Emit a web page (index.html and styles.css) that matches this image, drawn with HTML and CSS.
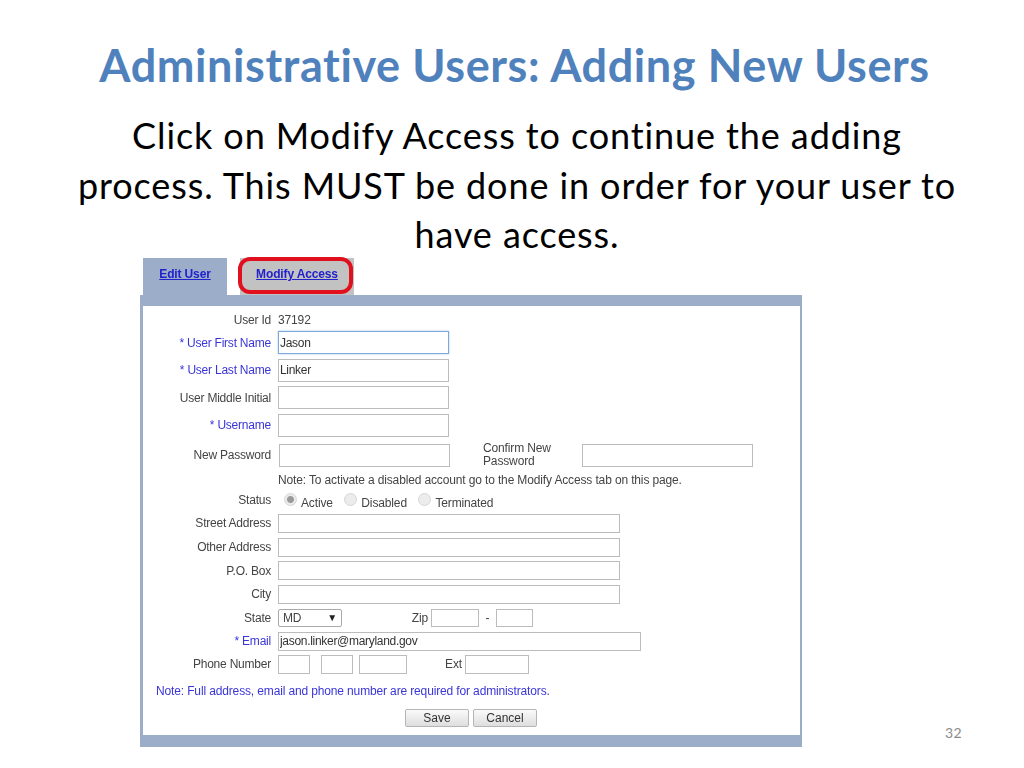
FILE: index.html

```html
<!DOCTYPE html>
<html lang="en">
<head>
    <meta charset="UTF-8">
    <meta name="viewport" content="width=device-width, initial-scale=1.0">
    <title>Administrative Users: Adding New Users</title>
    <link rel="stylesheet" href="styles.css">
</head>
<body>
    <div class="slide">
        <h1>Administrative Users: Adding New Users</h1>
        <p class="lead">Click on Modify Access to continue the adding<br>process. This MUST be done in order for your user to<br>have access.</p>
        <div class="shot-row">
            <div class="shot">
                <div class="tabs">
                    <div class="tab tab-active"><a href="#">Edit User</a></div>
                    <div class="tab tab-other"><a href="#">Modify Access</a><span class="red-mark"></span></div>
                </div>
                <div class="panel">
                    <div class="row row-id"><label>User Id</label><span class="value">37192</span></div>
                    <div class="row row-tall"><label class="req">* User First Name</label><input class="w-171 focused" value="Jason"></div>
                    <div class="row row-tall"><label class="req">* User Last Name</label><input class="w-171" value="Linker"></div>
                    <div class="row row-tall"><label>User Middle Initial</label><input class="w-171"></div>
                    <div class="row row-tall"><label class="req">* Username</label><input class="w-171"></div>
                    <div class="row row-tall row-pass">
                        <label>New Password</label><input class="w-171 nudge">
                        <span class="confirm">Confirm New<br>Password</span><input class="w-171">
                    </div>
                    <div class="row row-note"><label></label><span class="value">Note: To activate a disabled account go to the Modify Access tab on this page.</span></div>
                    <div class="row row-status">
                        <label>Status</label>
                        <div class="radios">
                            <input type="radio" name="status" checked disabled><span>Active</span>
                            <input type="radio" name="status" disabled><span>Disabled</span>
                            <input type="radio" name="status" disabled><span>Terminated</span>
                        </div>
                    </div>
                    <div class="row row-short first-short"><label>Street Address</label><input class="w-342"></div>
                    <div class="row row-short"><label>Other Address</label><input class="w-342"></div>
                    <div class="row row-short"><label>P.O. Box</label><input class="w-342"></div>
                    <div class="row row-short"><label>City</label><input class="w-342"></div>
                    <div class="row row-state">
                        <label>State</label>
                        <div class="select"><span>MD</span><span class="arrow">▼</span></div>
                        <span class="zip-label">Zip</span><input class="w-48">
                        <span class="dash">-</span><input class="w-37">
                    </div>
                    <div class="row row-short row-email"><label class="req">* Email</label><input class="w-363" value="jason.linker@maryland.gov"></div>
                    <div class="row row-short">
                        <label>Phone Number</label>
                        <input class="w-32"><input class="w-32 gap-11"><input class="w-48 gap-6">
                        <span class="ext-label">Ext</span><input class="w-64">
                    </div>
                    <div class="required-note">Note: Full address, email and phone number are required for administrators.</div>
                    <div class="buttons">
                        <button type="button">Save</button>
                        <button type="button">Cancel</button>
                    </div>
                </div>
            </div>
            <div class="page-num">32</div>
        </div>
    </div>
</body>
</html>
```

FILE: styles.css

```css
html, body {
    margin: 0;
    padding: 0;
    background: #fff;
}
.slide {
    width: 1024px;
    height: 768px;
    overflow: hidden;
    font-family: Lato, "Open Sans", sans-serif;
    font-variant-ligatures: none;
}
h1 {
    margin: 0;
    padding: 37px 0 0 5px;
    height: 56px;
    line-height: 56px;
    font-size: 45px;
    letter-spacing: 0.6px;
    font-weight: 700;
    color: #4f81bd;
    text-align: center;
    white-space: nowrap;
}
.lead {
    margin: 0;
    padding: 18px 0 0 10px;
    height: 146px;
    font-size: 36px;
    letter-spacing: 0.9px;
    line-height: 49.5px;
    color: #000;
    text-align: center;
    white-space: nowrap;
}
.shot-row {
    display: flex;
    margin-top: 1px;
    padding-left: 140px;
}
.shot {
    width: 662px;
    font-family: "Liberation Sans", Arial, sans-serif;
    font-size: 12px;
    letter-spacing: -0.14px;
    color: #444;
    filter: blur(0.45px);
}
.tabs {
    display: flex;
    height: 37px;
    padding-left: 3px;
}
.tab {
    position: relative;
    display: flex;
    align-items: center;
    justify-content: center;
    padding-bottom: 5px;
    box-sizing: border-box;
}
.tab a {
    color: #2222cc;
    font-weight: bold;
    font-size: 12px;
}
.tab-active {
    width: 84px;
    background: #9cadc9;
}
.tab-other {
    width: 114px;
    margin-left: 13px;
    background: #c2c2c2;
}
.red-mark {
    position: absolute;
    left: -2px;
    top: -1px;
    width: 115px;
    height: 37px;
    box-sizing: border-box;
    border: 4px solid #e0101f;
    border-radius: 12px;
}
.panel {
    border: solid #9cadc9;
    border-width: 11px 2px 12px 3px;
    padding: 3px 0 8px;
    background: #fff;
}
.row {
    display: flex;
    align-items: center;
}
.row label {
    width: 128px;
    margin-right: 7px;
    text-align: right;
    letter-spacing: -0.22px;
    flex: none;
}
.row .req, .required-note {
    color: #3a35d8;
}
.row-id {
    height: 22px;
}
.row-tall {
    height: 23px;
    margin-top: 4.67px;
}
.row-id + .row-tall {
    margin-top: 0;
}
.row-pass {
    margin-top: 7px;
}
.row-note {
    height: 18px;
    margin-top: 4px;
}
.row-status {
    height: 18px;
    margin: 2px 0 5px;
}
.row-short {
    height: 19px;
    margin-top: 4.67px;
}
.first-short {
    margin-top: 2px;
}
.row-state {
    height: 18px;
    margin-top: 5px;
}
.row-email {
    margin-top: 5px;
}
.row-email + .row-short {
    margin-top: 4px;
}
input {
    box-sizing: border-box;
    height: 100%;
    margin: 0;
    padding: 0 1px;
    border: 1px solid #bcbcbc;
    background: #fff;
    font-family: inherit;
    font-size: 12px;
    letter-spacing: -0.3px;
    color: #333;
    outline: none;
    flex: none;
}
.focused {
    border-color: #7da9da;
    box-shadow: 0 0 2px #a8c8ea;
}
.w-171 { width: 171px; }
.w-342 { width: 342px; }
.w-363 { width: 363px; }
.w-48 { width: 48px; }
.w-37 { width: 37px; }
.w-32 { width: 32px; }
.w-64 { width: 64px; }
.gap-11 { margin-left: 11px; }
.gap-6 { margin-left: 6px; }
.nudge { margin-left: 1px; }
.confirm {
    width: 99px;
    margin-left: 33px;
    line-height: 13px;
    flex: none;
}
.radios {
    display: flex;
    align-items: center;
    margin-left: 6px;
}
.radios input {
    appearance: none;
    width: 13px;
    height: 13px;
    padding: 0;
    border: 1px solid #d6d6d6;
    border-radius: 50%;
    background: #ececec;
    margin: 0 4px 0 0;
}
.radios input:checked {
    background: radial-gradient(circle, #9a9a9a 0 3px, #ececec 4px);
}
.radios span {
    margin: 6px 11.5px 0 0;
}
.select {
    display: flex;
    align-items: center;
    justify-content: space-between;
    box-sizing: border-box;
    width: 64px;
    height: 100%;
    padding: 0 4px;
    border: 1px solid #a9a9a9;
    border-radius: 2px;
    flex: none;
}
.arrow {
    font-size: 10px;
    color: #222;
}
.zip-label {
    width: 86px;
    margin-right: 3px;
    text-align: right;
    flex: none;
}
.dash {
    width: 17px;
    text-align: center;
    flex: none;
}
.ext-label {
    width: 55px;
    margin-right: 3px;
    text-align: right;
    flex: none;
}
.required-note {
    margin: 9px 0 0 13px;
    height: 16px;
    line-height: 16px;
}
.buttons {
    display: flex;
    gap: 4px;
    margin: 10px 0 0 262px;
    height: 18px;
}
button {
    box-sizing: border-box;
    height: 100%;
    width: 64px;
    padding: 0;
    border: 1px solid #b5b5b5;
    border-radius: 2px;
    background: linear-gradient(#fafafa, #dedede);
    font-family: inherit;
    font-size: 12px;
    color: #333;
}
.page-num {
    align-self: flex-end;
    margin: 0 0 6px 143px;
    font-family: Lato, sans-serif;
    font-size: 14px;
    letter-spacing: 0.5px;
    color: #8b8b8b;
}
```
